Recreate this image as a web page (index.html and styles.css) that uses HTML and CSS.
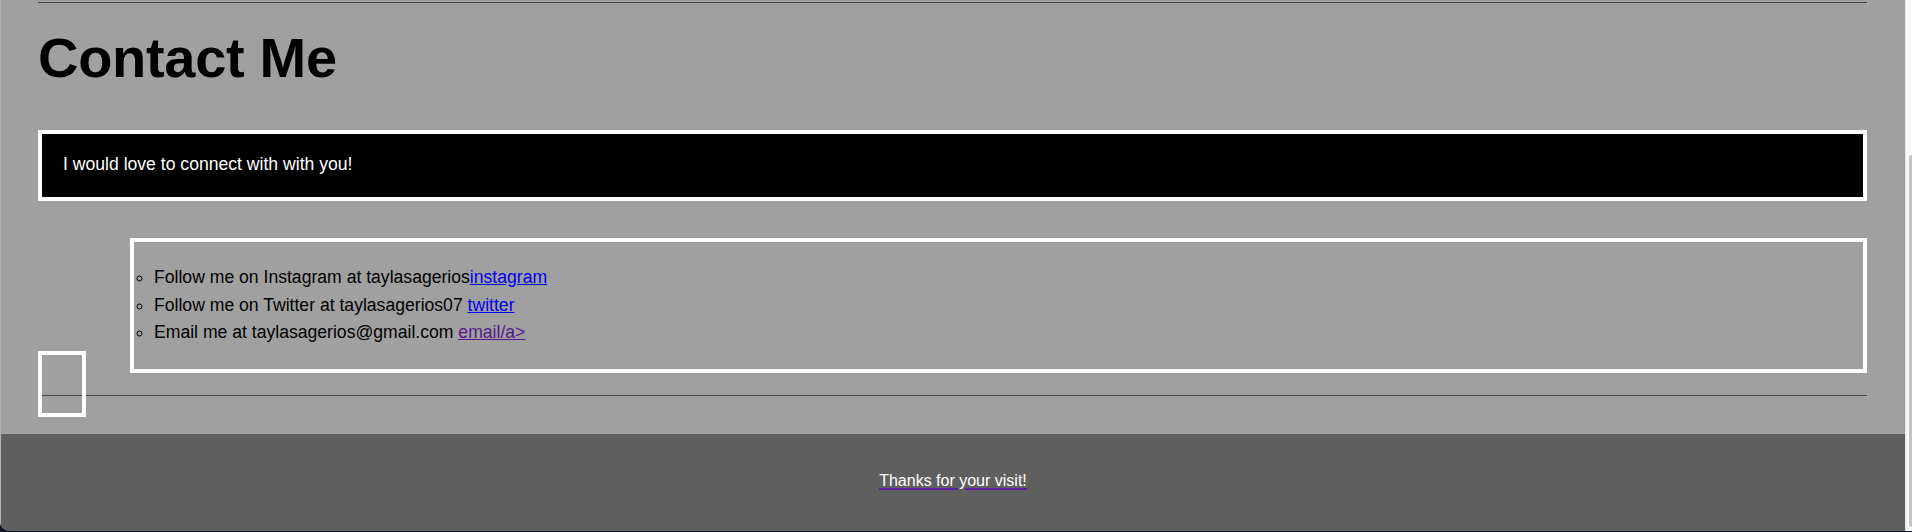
FILE: index.html
```html
<!DOCTYPE html>
<html lang="en">
<head>
<meta charset="utf-8">
<title>Contact Me</title>
<link rel="stylesheet" href="styles.css">
</head>
<body>
<div class="window">
  <div class="page">
    <main class="main">
      <hr class="rule rule-top">
      <h1 class="title">Contact Me</h1>
      <div class="intro">I would love to connect with with you!</div>
      <ul class="links">
        <li>Follow me on Instagram at taylasagerios<a class="link" href="#instagram">instagram</a></li>
        <li>Follow me on Twitter at taylasagerios07 <a class="link" href="#twitter">twitter</a></li>
        <li>Email me at taylasagerios@gmail.com <a class="link visited" href="#email">email/a&gt;</a></li>
      </ul>
      <div class="photo"></div>
      <hr class="rule rule-bottom">
    </main>
    <footer class="footer">
      <a class="footer-link" href="#top"><span class="footer-text">Thanks for your visit!</span></a>
    </footer>
  </div>
  <div class="scrollbar"><div class="thumb"></div></div>
</div>
</body>
</html>
```

FILE: styles.css
```css
html, body {
  margin: 0;
  padding: 0;
  background: #17172a;
  height: 532px;
  overflow: hidden;
}

.window {
  display: flex;
  height: 531px;
  overflow: hidden;
  border-bottom-left-radius: 10px;
  background: #a0a0a0;
  font-family: "Liberation Sans", Arial, Helvetica, sans-serif;
  color: #000;
}

.page {
  flex: 1;
  display: flex;
  flex-direction: column;
  background: #a0a0a0;
  border-left: 1px solid #b2b2b2;
}

.main {
  display: flow-root;
  padding: 0 38px 0 37px;
}

.rule {
  border: 0;
  border-top: 1px solid #484848;
  height: 0;
  margin: 0;
  overflow: visible;
}

.rule-top {
  margin-top: 2px;
}

.title {
  font-size: 56px;
  font-weight: bold;
  line-height: 64px;
  margin: 23px 0 0 0;
  letter-spacing: -0.3px;
}

.intro {
  margin-top: 40px;
  background: #000;
  color: #fff;
  border: 4px solid #fff;
  font-size: 17.6px;
  line-height: 21px;
  padding: 20px 20px 22px 21px;
}

.links {
  margin: 37px 0 0 92px;
  border: 4px solid #fff;
  padding: 22px 20px 22px 20px;
  list-style: circle outside;
  font-size: 17.6px;
  line-height: 27.5px;
}

.link {
  color: #0000ee;
  text-decoration: underline;
}

.link.visited {
  color: #551a8b;
}

.photo {
  float: left;
  width: 40px;
  height: 58px;
  border: 4px solid #fff;
  margin-top: -22px;
}

.rule-bottom {
  margin-top: 22px;
}

.footer {
  flex: 1;
  margin-top: 17px;
  background: #5f5f5f;
  text-align: center;
  padding: 37px 0 40px;
  font-size: 16px;
  line-height: 20px;
}

.footer-link {
  color: #551a8b;
  text-decoration: none;
}

.footer-text {
  color: #fff;
  text-decoration-line: underline;
  text-decoration-color: #5b1fa3;
  text-decoration-thickness: 1.5px;
  text-underline-offset: 2px;
}

.scrollbar {
  width: 6px;
  background: #f8f8f8;
  border-left: 1px solid #e4e4e4;
  padding-top: 155px;
  display: flex;
  justify-content: flex-end;
}

.thumb {
  width: 3px;
  height: 372px;
  background: #c4c4c4;
  border-radius: 3px 0 0 3px;
}
```
